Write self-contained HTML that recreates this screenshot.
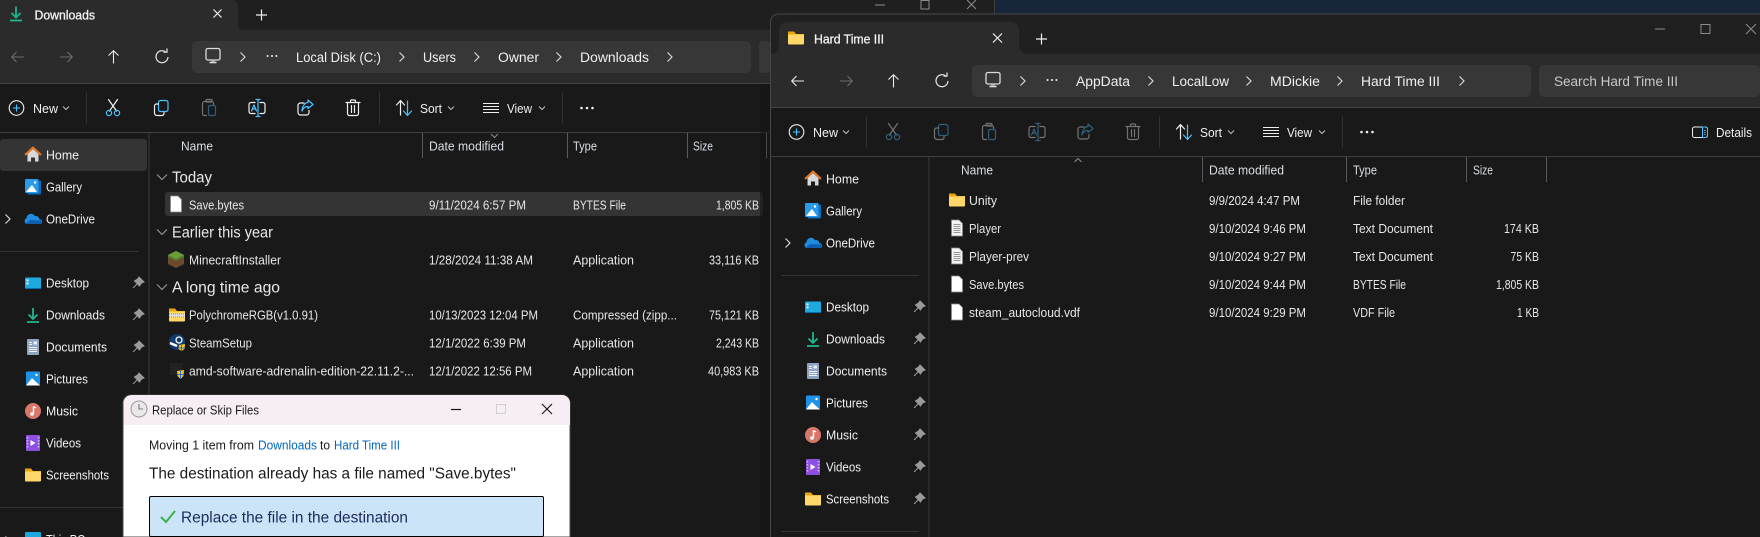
<!DOCTYPE html>
<html lang="en"><head><meta charset="utf-8"><title>Explorer windows</title>
<style>
html,body{margin:0;padding:0;background:#17263a;width:1760px;height:537px;overflow:hidden}
svg{display:block;position:absolute;left:0;top:0}
text{font-family:"Liberation Sans",sans-serif;font-size:12.5px;fill:#e6e6e6;white-space:pre}
.nav{fill:#f0f0f0}
.hdr{fill:#d8dfe6}
.addr{font-size:13.5px;fill:#f0f0f0}
.grp{font-size:15.5px;fill:#e8e8e8}
.tab{font-size:13px;fill:#f2f2f2;stroke:#f2f2f2;stroke-width:.3}
.tb{fill:#f0f0f0;font-size:13px}
.bl{fill:#0067c0}
.dk{fill:#1a1a1a}
.l{fill:none;stroke:#f0f0f0;stroke-width:1.2;stroke-linecap:round;stroke-linejoin:round}
.b{fill:none;stroke:#4cc2ff;stroke-width:1.2;stroke-linecap:round;stroke-linejoin:round}
.d{opacity:.42}
</style></head><body>
<svg width="1760" height="537" viewBox="0 0 1760 537">
<defs>
<g id="chev"><path d="M-2.500-4.500 2 0-2.500 4.500" fill="none" stroke="#d8d8d8" stroke-width="1.200"/></g>
<g id="dn"><path d="M-3-1.500 0 1.500 3-1.500" fill="none" stroke="#bdbdbd" stroke-width="1"/></g>
<g id="gchev"><path d="M-5-2.500 0 2.500 5-2.500" fill="none" stroke="#9a9a9a" stroke-width="1.100"/></g>
<g id="folder"><path d="M-8-6.500h6l2 2.500h8v4h-16z" fill="#e8a70c"/><path d="M-8-3.500h16v9a1 1 0 0 1-1 1h-14a1 1 0 0 1-1-1z" fill="#ffd869"/></g>
<g id="file"><path d="M-5.500-8h7.500l3.500 3.500v12.500h-11z" fill="#fff" stroke="#8a8a8a" stroke-width=".8"/></g>
<g id="txt"><path d="M-5.500-8h7.500l3.500 3.500v12.500h-11z" fill="#f4f4f4" stroke="#8a8a8a" stroke-width=".8"/><path d="M-3.500-3.500h7M-3.500-1.500h7M-3.500.5h7M-3.500 2.500h7M-3.500 4.500h7" stroke="#777" stroke-width=".8"/></g>
<g id="home"><path d="M-5.500-1v7.500h3.500v-4h4v4h3.500v-7.500l-5.500-5z" fill="#d8d8d8"/><path d="M-8 0 0-7.500 8 0" fill="none" stroke="#e8761c" stroke-width="2"/></g>
<g id="gallery"><rect x="-5.500" y="-6.500" width="13.500" height="14" rx="1" fill="#0f6cbd"/><rect x="-8" y="-8" width="13.500" height="14" rx="1" fill="#2a9bea"/><path d="M-7 5-2.500-.5-1-2 4 5z" fill="#fff"/><circle cx="2" cy="-4.500" r="1.200" fill="#fff"/></g>
<g id="cloud"><path d="M-5.500 5a3 3 0 0 1-1-5.800 4.500 4.500 0 0 1 8.500-2 3.500 3.500 0 0 1 4.500 3 2.500 2.500 0 0 1 1 4.800z" fill="#1f8be0"/><path d="M-7.500 5h15a2.500 2.500 0 0 0 .5-3.500l-11-.5z" fill="#0f5fb0"/></g>
<g id="desk"><rect x="-8" y="-5.500" width="16" height="11.500" rx="1" fill="#1eaadf"/><rect x="-6.500" y="-3.500" width="2" height="1.800" fill="#fff"/><rect x="-6.500" y="-.5" width="2" height="1.800" fill="#fff"/><path d="M-8 5h16v1h-16z" fill="#0a6fb0"/></g>
<g id="dl"><path d="M0-7V3.500M-4.500-.5 0 4 4.500-.5" fill="none" stroke="#1fb58f" stroke-width="1.800"/><path d="M-6 7h12" stroke="#1fb58f" stroke-width="1.800"/></g>
<g id="docs"><rect x="-6" y="-8" width="12" height="16" rx="1" fill="#8fa4c0"/><path d="M-4-4.500h3M-4-2.500h3M-4 .5h8M-4 2.500h8M-4 4.500h8" stroke="#eef2f7" stroke-width="1"/><rect x=".5" y="-5.500" width="3.500" height="3" fill="#eef2f7"/></g>
<g id="pics"><rect x="-7" y="-7.500" width="14" height="14" rx="1" fill="#1d92e6"/><path d="M-7 6.500-1-1l2.500 2.500 1 1 4.500 4z" fill="#fff"/><circle cx="3.500" cy="-4" r="1.200" fill="#fff"/></g>
<g id="music"><circle r="8" fill="#d9766a"/><path d="M.5-4.500v7" stroke="#fff" stroke-width="1.400"/><circle cx="-1" cy="3" r="1.800" fill="#fff"/><path d="M.5-4.500 3-3" stroke="#fff" stroke-width="1.300"/></g>
<g id="vid"><rect x="-7" y="-8" width="14" height="16" rx="1" fill="#8d4fe0"/><path d="M-2.500-3v6l5-3z" fill="#fff"/><path d="M-5.500-6v12M5.500-6v12" stroke="#d7b8ff" stroke-width="1.500" stroke-dasharray="1.500 1.500"/></g>
<g id="pin"><path d="M1-6 6-1 3.500 0 1.500 3-3.500-2-.5-4zM-1 1-5 5" fill="#9a9a9a" stroke="#9a9a9a" stroke-width="1"/></g>
<g id="back"><path d="M6 0H-6M-1.500-5-6.300 0-1.500 5" fill="none" stroke="currentColor" stroke-width="1.100"/></g>
<g id="up"><path d="M0 6.500V-6M-5-1.500 0-6.300 5-1.500" fill="none" stroke="currentColor" stroke-width="1.100"/></g>
<g id="refresh"><path d="M4.300-4.500a6 6 0 1 0 1.700 4.500M1.500-4.800h3.500V-8.500" fill="none" stroke="#eaeaea" stroke-width="1.200"/></g>
<g id="pc"><rect x="-7" y="-7.500" width="14" height="11.500" rx="1.800" fill="none" stroke="#dcdcdc" stroke-width="1.300"/><path d="M-3.500 6.500h7" stroke="#dcdcdc" stroke-width="1.600"/><path d="M-1 4v2.500M1 4v2.500" stroke="#dcdcdc"/></g>
<g id="more"><circle cx="-5.500" r="1.300" fill="#eee"/><circle r="1.300" fill="#eee"/><circle cx="5.500" r="1.300" fill="#eee"/></g>
<g id="plus"><circle r="7.300" fill="none" stroke="#eee" stroke-width="1.100"/><path d="M-3.500 0h7M0-3.500v7" stroke="#4cc2ff" stroke-width="1.100"/></g>
<g id="cut"><path class="l" d="M-4.500-8.500 3.500 3M4.500-8.500-3.500 3"/><circle class="b" cx="-4" cy="5" r="2.600"/><circle class="b" cx="4" cy="5" r="2.600"/></g>
<g id="copy"><rect class="b" x="-2.500" y="-7.500" width="9.500" height="11" rx="2"/><path class="l" d="M-2.500-4h-2a2 2 0 0 0-2 2v7a2.500 2.500 0 0 0 2.500 2.500h5a2 2 0 0 0 2-2v-1"/></g>
<g id="paste"><path class="l" d="M-2.500 7.500h-2a2 2 0 0 1-2-2v-10a2 2 0 0 1 2-2h7a2 2 0 0 1 2 2v1"/><rect class="l" x="-3" y="-8.500" width="6" height="2.500" rx="1"/><rect class="b" x="-.5" y="-2.500" width="7" height="10" rx="1.500"/></g>
<g id="rename"><path class="l" d="M-2-5.500h-4a2 2 0 0 0-2 2v7a2 2 0 0 0 2 2h4M3-5.500h3a2 2 0 0 1 2 2v7a2 2 0 0 1-2 2h-3"/><path class="b" d="M-1-8.500h4M-1 8.500h4M1-8.500V8.500"/><path class="b" d="M-5.500 3-3-3-.5 3M-4.700 1h3.500"/></g>
<g id="share"><path class="l" d="M-1-5h-3.500a2.500 2.500 0 0 0-2.500 2.500v7a2.500 2.500 0 0 0 2.500 2.500h6a2.500 2.500 0 0 0 2.500-2.500v-2"/><path class="b" d="M3-8 8-3.500 3 .5V-1.500C0-1.500-2 0-3 3-3-1.500 0-5.500 3-5.500z"/></g>
<g id="trash"><path class="l" d="M-7-5.500H7M-2.500-5.500v-1.500a1 1 0 0 1 1-1h3a1 1 0 0 1 1 1v1.500M-5.500-5.500v11a2 2 0 0 0 2 2h7a2 2 0 0 0 2-2v-11M-1.500-2.500v7M1.500-2.500v7"/></g>
<g id="sort"><path class="l" d="M-3.500 7V-7M-7.500-3-3.500-7.500.5-3"/><path class="b" d="M3.500-7V7M-.5 3 3.500 7.500 7.500 3"/></g>
<g id="view"><path d="M-8-4.500H8M-8-1.500H8M-8 1.500H8M-8 4.500H8" stroke="#eee" stroke-width="1"/></g>
</defs>

<rect width="1760" height="537" fill="#17263a"/>

<!-- LEFT WINDOW -->
<rect x="0" y="0" width="994" height="537" fill="#1f1f1f"/>
<rect x="994" y="0" width="1" height="14" fill="#3b3b3b"/>
<path d="M0 0H232a6 6 0 0 1 6 6V24a6 6 0 0 0 6 6H0z" fill="#2b2b2b"/>
<rect x="0" y="30" width="994" height="53" fill="#2b2b2b"/>
<rect x="0" y="83" width="994" height="1" fill="#424242"/>
<rect x="0" y="84" width="994" height="453" fill="#191919"/>
<rect x="0" y="132" width="994" height="1" fill="#3f3f3f"/>
<use href="#dl" x="16" y="13.500"/>
<text class="tab" x="34.500" y="19.500" textLength="60.500" lengthAdjust="spacingAndGlyphs">Downloads</text>
<path d="M213.500 9.500l8 8M221.500 9.500l-8 8" stroke="#eee" stroke-width="1.200"/>
<path d="M256 15h11M261.500 9.500v11" stroke="#eee" stroke-width="1.200"/>
<path d="M875 5h10" stroke="#8c8c8c"/><rect x="921" y="0.500" width="8" height="8.500" fill="none" stroke="#8c8c8c"/><path d="M967 0l9 9M976 0l-9 9" stroke="#8c8c8c"/>

<g color="#6d6d6d"><use href="#back" x="18" y="57"/><use href="#back" transform="translate(66 57) scale(-1 1)"/></g>
<use href="#up" x="113.500" y="57" color="#eaeaea"/>
<use href="#refresh" x="162" y="57"/>
<rect x="192" y="41" width="559" height="32" rx="5" fill="#373737"/>
<rect x="759" y="41" width="12" height="32" rx="4" fill="#373737"/>
<use href="#pc" x="213" y="56"/>
<use href="#chev" x="243" y="57"/>
<g transform="translate(272 56)"><use href="#more" transform="scale(.8)"/></g>
<text class="addr" x="296" y="62" textLength="85" lengthAdjust="spacingAndGlyphs">Local Disk (C:)</text><use href="#chev" x="402" y="57"/>
<text class="addr" x="423" y="62" textLength="33" lengthAdjust="spacingAndGlyphs">Users</text><use href="#chev" x="477" y="57"/>
<text class="addr" x="498" y="62" textLength="41" lengthAdjust="spacingAndGlyphs">Owner</text><use href="#chev" x="559" y="57"/>
<text class="addr" x="580" y="62" textLength="69" lengthAdjust="spacingAndGlyphs">Downloads</text><use href="#chev" x="670" y="57"/>

<use href="#plus" x="16.500" y="108"/>
<text class="tb" x="33" y="113" textLength="25" lengthAdjust="spacingAndGlyphs">New</text><use href="#dn" x="66" y="108"/>
<rect x="86" y="92" width="1" height="32" fill="#303030"/>
<use href="#cut" x="113" y="108"/><use href="#copy" x="161" y="108"/><g class="d"><use href="#paste" x="209" y="108"/></g>
<use href="#rename" x="257" y="108"/><use href="#share" x="305" y="108"/><use href="#trash" x="353" y="108"/>
<rect x="379" y="92" width="1" height="32" fill="#303030"/>
<use href="#sort" x="404" y="108"/>
<text class="tb" x="420" y="113" textLength="22" lengthAdjust="spacingAndGlyphs">Sort</text><use href="#dn" x="451" y="108"/>
<use href="#view" x="491" y="108"/>
<text class="tb" x="507" y="113" textLength="25" lengthAdjust="spacingAndGlyphs">View</text><use href="#dn" x="542" y="108"/>
<rect x="562" y="92" width="1" height="32" fill="#303030"/>
<use href="#more" x="587" y="108"/>

<rect x="148" y="133" width="2" height="404" fill="#2a2a2a"/>
<rect x="0" y="139" width="147" height="32" rx="3" fill="#343434"/>
<use href="#home" x="33" y="155"/><text class="nav" x="46" y="159.500" textLength="33" lengthAdjust="spacingAndGlyphs">Home</text>
<use href="#gallery" x="33" y="187"/><text class="nav" x="46" y="191.500" textLength="36" lengthAdjust="spacingAndGlyphs">Gallery</text>
<use href="#chev" x="8" y="219"/>
<use href="#cloud" x="33" y="219"/><text class="nav" x="46" y="223.500" textLength="49" lengthAdjust="spacingAndGlyphs">OneDrive</text>
<rect x="0" y="251" width="139" height="1" fill="#333"/>
<use href="#desk" x="33" y="283"/><text class="nav" x="46" y="287.500" textLength="43" lengthAdjust="spacingAndGlyphs">Desktop</text><use href="#pin" x="138" y="283"/>
<use href="#dl" x="33" y="315"/><text class="nav" x="46" y="319.500" textLength="59" lengthAdjust="spacingAndGlyphs">Downloads</text><use href="#pin" x="138" y="315"/>
<use href="#docs" x="33" y="347"/><text class="nav" x="46" y="351.500" textLength="61" lengthAdjust="spacingAndGlyphs">Documents</text><use href="#pin" x="138" y="347"/>
<use href="#pics" x="33" y="379"/><text class="nav" x="46" y="383.500" textLength="42" lengthAdjust="spacingAndGlyphs">Pictures</text><use href="#pin" x="138" y="379"/>
<use href="#music" x="33" y="411"/><text class="nav" x="46" y="415.500" textLength="32" lengthAdjust="spacingAndGlyphs">Music</text>
<use href="#vid" x="33" y="443"/><text class="nav" x="46" y="447.500" textLength="35" lengthAdjust="spacingAndGlyphs">Videos</text>
<use href="#folder" x="33" y="475"/><text class="nav" x="46" y="479.500" textLength="63" lengthAdjust="spacingAndGlyphs">Screenshots</text>
<rect x="0" y="507" width="123" height="1" fill="#333"/>
<use href="#chev" x="8" y="541"/>
<rect x="25" y="532" width="16" height="11" rx="1" fill="#1eaadf"/><text class="nav" x="46" y="544" textLength="39" lengthAdjust="spacingAndGlyphs">This PC</text>

<text class="hdr" x="181" y="150.500" textLength="32" lengthAdjust="spacingAndGlyphs">Name</text>
<text class="hdr" x="429" y="150.500" textLength="75" lengthAdjust="spacingAndGlyphs">Date modified</text>
<text class="hdr" x="573" y="150.500" textLength="24" lengthAdjust="spacingAndGlyphs">Type</text>
<text class="hdr" x="693" y="150.500" textLength="20" lengthAdjust="spacingAndGlyphs">Size</text>
<path d="M422.500 133v25M567.500 133v25M687.500 133v25M766.500 133v25" stroke="#5a5a5a"/>
<path d="M491 134l3.500 3.500 3.500-3.500" fill="none" stroke="#8c8c8c"/>
<rect x="165" y="192" width="598" height="24" rx="3" fill="#343434"/>
<use href="#gchev" x="162" y="177"/><text class="grp" x="172" y="182.500" textLength="40" lengthAdjust="spacingAndGlyphs">Today</text>
<use href="#file" x="176" y="204"/><text x="189" y="209.500" textLength="55" lengthAdjust="spacingAndGlyphs">Save.bytes</text>
<text x="429" y="209.500" textLength="97" lengthAdjust="spacingAndGlyphs">9/11/2024 6:57 PM</text><text x="573" y="209.500" textLength="53" lengthAdjust="spacingAndGlyphs">BYTES File</text><text x="716" y="209.500" textLength="43" lengthAdjust="spacingAndGlyphs">1,805 KB</text>
<use href="#gchev" x="162" y="232"/><text class="grp" x="172" y="237.500" textLength="101" lengthAdjust="spacingAndGlyphs">Earlier this year</text>
<g transform="translate(176 259)"><path d="M0-8 8-4V5L0 9-8 5V-4z" fill="#6d4a2c"/><path d="M0-8 8-4 0 0-8-4z" fill="#6aa03c"/><path d="M-8-4 0 0V2L-8-2z" fill="#4f8130"/><path d="M8-4 0 0V2L8-2z" fill="#4f8130"/></g>
<text x="189" y="264.500" textLength="92" lengthAdjust="spacingAndGlyphs">MinecraftInstaller</text>
<text x="429" y="264.500" textLength="104" lengthAdjust="spacingAndGlyphs">1/28/2024 11:38 AM</text><text x="573" y="264.500" textLength="61" lengthAdjust="spacingAndGlyphs">Application</text><text x="709" y="264.500" textLength="50" lengthAdjust="spacingAndGlyphs">33,116 KB</text>
<use href="#gchev" x="162" y="287"/><text class="grp" x="172" y="292.500" textLength="108" lengthAdjust="spacingAndGlyphs">A long time ago</text>
<g transform="translate(177 315)"><use href="#folder"/><path d="M-8-1H8v3H-8z" fill="#e0e0e0"/><path d="M-8-1H8" stroke="#888" stroke-dasharray="1 1"/><path d="M-8 2H8" stroke="#888" stroke-dasharray="1 1"/></g>
<text x="189" y="319.500" textLength="129" lengthAdjust="spacingAndGlyphs">PolychromeRGB(v1.0.91)</text>
<text x="429" y="319.500" textLength="109" lengthAdjust="spacingAndGlyphs">10/13/2023 12:04 PM</text><text x="573" y="319.500" textLength="104" lengthAdjust="spacingAndGlyphs">Compressed (zipp...</text><text x="709" y="319.500" textLength="50" lengthAdjust="spacingAndGlyphs">75,121 KB</text>
<g transform="translate(177 342)"><circle r="8" fill="#123a70"/><circle cx="2" cy="-2" r="3" fill="none" stroke="#fff" stroke-width="1.300"/><path d="M-7 1 0 4" stroke="#fff" stroke-width="2.500"/><path d="M2 3 8 2 7.500 7 4.500 9 1.500 7z" fill="#f3c623"/><path d="M4.500 3v6M1.800 6H8" stroke="#2a6fd0" stroke-width="1"/></g>
<text x="189" y="347.500" textLength="63" lengthAdjust="spacingAndGlyphs">SteamSetup</text>
<text x="429" y="347.500" textLength="97" lengthAdjust="spacingAndGlyphs">12/1/2022 6:39 PM</text><text x="573" y="347.500" textLength="61" lengthAdjust="spacingAndGlyphs">Application</text><text x="716" y="347.500" textLength="43" lengthAdjust="spacingAndGlyphs">2,243 KB</text>
<g transform="translate(177 371)"><path d="M-7-8H6V4H-7z" fill="#222"/><path d="M0 0 7-1 6.500 5 3.500 8 .5 5z" fill="#f3c623"/><path d="M3.500 0v8M.5 3.500H7" stroke="#2a6fd0" stroke-width="1"/></g>
<text x="189" y="375.500" textLength="225" lengthAdjust="spacingAndGlyphs">amd-software-adrenalin-edition-22.11.2-...</text>
<text x="429" y="375.500" textLength="103" lengthAdjust="spacingAndGlyphs">12/1/2022 12:56 PM</text><text x="573" y="375.500" textLength="61" lengthAdjust="spacingAndGlyphs">Application</text><text x="708" y="375.500" textLength="51" lengthAdjust="spacingAndGlyphs">40,983 KB</text>

<!-- DIALOG -->
<path d="M123 537V403a8 8 0 0 1 8-8H562a8 8 0 0 1 8 8V537z" fill="#fff" stroke="#4a4a4a" stroke-width="1"/>
<path d="M123.500 425V403a8 8 0 0 1 8-8H562a8 8 0 0 1 8 8V425z" fill="#f7edf4"/>
<g transform="translate(139 409)"><circle r="8" fill="#e8e8e8" stroke="#9a9a9a" stroke-width="1"/><path d="M0-5V0H4" fill="none" stroke="#777" stroke-width="1.100"/></g>
<text style="fill:#1a1a1a" x="152" y="414.500" textLength="107" lengthAdjust="spacingAndGlyphs">Replace or Skip Files</text>
<path d="M451 409.500h10" stroke="#111" stroke-width="1.200"/>
<rect x="496.500" y="404.500" width="9" height="9" fill="none" stroke="#cfcfcf"/>
<path d="M552 404 542 414M542 404 552 414" stroke="#111" stroke-width="1.100"/>
<text style="fill:#1a1a1a" x="149" y="449.500" textLength="105" lengthAdjust="spacingAndGlyphs">Moving 1 item from</text>
<text class="bl" x="258" y="449.500" textLength="59" lengthAdjust="spacingAndGlyphs">Downloads</text>
<text style="fill:#1a1a1a" x="320" y="449.500" textLength="10" lengthAdjust="spacingAndGlyphs">to</text>
<text class="bl" x="334" y="449.500" textLength="66" lengthAdjust="spacingAndGlyphs">Hard Time III</text>
<text style="fill:#1a1a1a;font-size:15.500px" x="149" y="478.500" textLength="367" lengthAdjust="spacingAndGlyphs">The destination already has a file named "Save.bytes"</text>
<rect x="149.500" y="496.500" width="394" height="40" rx="1.500" fill="#cce4f7" stroke="#000" stroke-width="1"/>
<path d="M161 517 166 522 175 511" fill="none" stroke="#3fae49" stroke-width="2"/>
<text style="fill:#1c2a5c;font-size:15.500px" x="181" y="522.500" textLength="227" lengthAdjust="spacingAndGlyphs">Replace the file in the destination</text>

<!-- RIGHT WINDOW -->
<path d="M770 537V22a8 8 0 0 1 8-8H1760V537z" fill="#202020"/>
<rect x="760" y="84" width="10" height="453" fill="#141414" opacity=".55"/>
<rect x="766" y="133" width="1" height="25" fill="#4a4a4a"/>
<path d="M770.500 537V22a8 8 0 0 1 8-8H1760" fill="none" stroke="#474747"/>
<path d="M771 54a8 8 0 0 0 8-8V30a8 8 0 0 1 8-8H1011a8 8 0 0 1 8 8V46a8 8 0 0 0 8 8z" fill="#2b2b2b"/>
<rect x="771" y="54" width="989" height="53" fill="#2b2b2b"/>
<rect x="771" y="107" width="989" height="1" fill="#434343"/>
<rect x="771" y="108" width="989" height="429" fill="#191919"/>
<rect x="771" y="156" width="989" height="1" fill="#3f3f3f"/>
<use href="#folder" x="796" y="38"/>
<text class="tab" x="814" y="43.500" textLength="70" lengthAdjust="spacingAndGlyphs">Hard Time III</text>
<path d="M993 33.500l9 9M1002 33.500l-9 9" stroke="#eee" stroke-width="1.200"/>
<path d="M1036 39h11M1041.500 33.500v11" stroke="#eee" stroke-width="1.200"/>
<path d="M1655 29h10" stroke="#8c8c8c"/><rect x="1701" y="24.500" width="9" height="9" fill="none" stroke="#8c8c8c"/><path d="M1746 24l10 10M1756 24l-10 10" stroke="#8c8c8c"/>

<use href="#back" x="798" y="81" color="#eaeaea"/>
<use href="#back" transform="translate(846 81) scale(-1 1)" color="#6d6d6d"/>
<use href="#up" x="893.500" y="81" color="#eaeaea"/>
<use href="#refresh" x="942" y="81"/>
<rect x="972" y="65" width="559" height="32" rx="5" fill="#373737"/>
<rect x="1539" y="65" width="221" height="32" rx="5" fill="#373737"/>
<use href="#pc" x="993" y="80"/>
<use href="#chev" x="1023" y="81"/>
<g transform="translate(1052 80)"><use href="#more" transform="scale(.8)"/></g>
<text class="addr" x="1076" y="86" textLength="54" lengthAdjust="spacingAndGlyphs">AppData</text><use href="#chev" x="1151" y="81"/>
<text class="addr" x="1172" y="86" textLength="57" lengthAdjust="spacingAndGlyphs">LocalLow</text><use href="#chev" x="1249" y="81"/>
<text class="addr" x="1270" y="86" textLength="50" lengthAdjust="spacingAndGlyphs">MDickie</text><use href="#chev" x="1340" y="81"/>
<text class="addr" x="1361" y="86" textLength="79" lengthAdjust="spacingAndGlyphs">Hard Time III</text><use href="#chev" x="1462" y="81"/>
<text class="addr" style="fill:#c8c8c8" x="1554" y="86" textLength="124" lengthAdjust="spacingAndGlyphs">Search Hard Time III</text>

<use href="#plus" x="796.500" y="132"/>
<text class="tb" x="813" y="137" textLength="25" lengthAdjust="spacingAndGlyphs">New</text><use href="#dn" x="846" y="132"/>
<rect x="866" y="116" width="1" height="32" fill="#303030"/>
<g class="d"><use href="#cut" x="893" y="132"/><use href="#copy" x="941" y="132"/><use href="#paste" x="989" y="132"/><use href="#rename" x="1037" y="132"/><use href="#share" x="1085" y="132"/><use href="#trash" x="1133" y="132"/></g>
<rect x="1159" y="116" width="1" height="32" fill="#303030"/>
<use href="#sort" x="1184" y="132"/>
<text class="tb" x="1200" y="137" textLength="22" lengthAdjust="spacingAndGlyphs">Sort</text><use href="#dn" x="1231" y="132"/>
<use href="#view" x="1271" y="132"/>
<text class="tb" x="1287" y="137" textLength="25" lengthAdjust="spacingAndGlyphs">View</text><use href="#dn" x="1322" y="132"/>
<rect x="1342" y="116" width="1" height="32" fill="#303030"/>
<use href="#more" x="1367" y="132"/>
<rect class="l" x="1692.500" y="127" width="15" height="10.500" rx="2" style="stroke-width:1"/>
<path d="M1702.500 127h3a2 2 0 0 1 2 2v6.500a2 2 0 0 1-2 2h-3z" fill="none" stroke="#4cc2ff"/>
<path d="M1704 130.500h2M1704 132.500h2M1704 134.500h2" stroke="#4cc2ff" stroke-width=".8"/>
<text class="tb" x="1716" y="137" textLength="36" lengthAdjust="spacingAndGlyphs">Details</text>

<rect x="928" y="157" width="2" height="380" fill="#2a2a2a"/>
<use href="#home" x="813" y="179"/><text class="nav" x="826" y="183.500" textLength="33" lengthAdjust="spacingAndGlyphs">Home</text>
<use href="#gallery" x="813" y="211"/><text class="nav" x="826" y="215.500" textLength="36" lengthAdjust="spacingAndGlyphs">Gallery</text>
<use href="#chev" x="788" y="243"/>
<use href="#cloud" x="813" y="243"/><text class="nav" x="826" y="247.500" textLength="49" lengthAdjust="spacingAndGlyphs">OneDrive</text>
<rect x="781" y="275" width="138" height="1" fill="#333"/>
<use href="#desk" x="813" y="307"/><text class="nav" x="826" y="311.500" textLength="43" lengthAdjust="spacingAndGlyphs">Desktop</text><use href="#pin" x="919" y="307"/>
<use href="#dl" x="813" y="339"/><text class="nav" x="826" y="343.500" textLength="59" lengthAdjust="spacingAndGlyphs">Downloads</text><use href="#pin" x="919" y="339"/>
<use href="#docs" x="813" y="371"/><text class="nav" x="826" y="375.500" textLength="61" lengthAdjust="spacingAndGlyphs">Documents</text><use href="#pin" x="919" y="371"/>
<use href="#pics" x="813" y="403"/><text class="nav" x="826" y="407.500" textLength="42" lengthAdjust="spacingAndGlyphs">Pictures</text><use href="#pin" x="919" y="403"/>
<use href="#music" x="813" y="435"/><text class="nav" x="826" y="439.500" textLength="32" lengthAdjust="spacingAndGlyphs">Music</text><use href="#pin" x="919" y="435"/>
<use href="#vid" x="813" y="467"/><text class="nav" x="826" y="471.500" textLength="35" lengthAdjust="spacingAndGlyphs">Videos</text><use href="#pin" x="919" y="467"/>
<use href="#folder" x="813" y="499"/><text class="nav" x="826" y="503.500" textLength="63" lengthAdjust="spacingAndGlyphs">Screenshots</text><use href="#pin" x="919" y="499"/>
<rect x="781" y="531" width="138" height="1" fill="#333"/>

<text class="hdr" x="961" y="174.500" textLength="32" lengthAdjust="spacingAndGlyphs">Name</text>
<text class="hdr" x="1209" y="174.500" textLength="75" lengthAdjust="spacingAndGlyphs">Date modified</text>
<text class="hdr" x="1353" y="174.500" textLength="24" lengthAdjust="spacingAndGlyphs">Type</text>
<text class="hdr" x="1473" y="174.500" textLength="20" lengthAdjust="spacingAndGlyphs">Size</text>
<path d="M1202.500 157v25M1346.500 157v25M1466.500 157v25M1546.500 157v25" stroke="#5a5a5a"/>
<path d="M1074.500 162l3.500-3.500 3.500 3.500" fill="none" stroke="#8c8c8c"/>

<use href="#folder" x="957" y="200"/><text x="969" y="205" textLength="28" lengthAdjust="spacingAndGlyphs">Unity</text>
<text x="1209" y="205" textLength="91" lengthAdjust="spacingAndGlyphs">9/9/2024 4:47 PM</text><text x="1353" y="205" textLength="52" lengthAdjust="spacingAndGlyphs">File folder</text>
<use href="#txt" x="957" y="228"/><text x="969" y="233" textLength="32" lengthAdjust="spacingAndGlyphs">Player</text>
<text x="1209" y="233" textLength="97" lengthAdjust="spacingAndGlyphs">9/10/2024 9:46 PM</text><text x="1353" y="233" textLength="80" lengthAdjust="spacingAndGlyphs">Text Document</text><text x="1504" y="233" textLength="35" lengthAdjust="spacingAndGlyphs">174 KB</text>
<use href="#txt" x="957" y="256"/><text x="969" y="261" textLength="60" lengthAdjust="spacingAndGlyphs">Player-prev</text>
<text x="1209" y="261" textLength="97" lengthAdjust="spacingAndGlyphs">9/10/2024 9:27 PM</text><text x="1353" y="261" textLength="80" lengthAdjust="spacingAndGlyphs">Text Document</text><text x="1510.500" y="261" textLength="28.500" lengthAdjust="spacingAndGlyphs">75 KB</text>
<use href="#file" x="957" y="284"/><text x="969" y="289" textLength="55" lengthAdjust="spacingAndGlyphs">Save.bytes</text>
<text x="1209" y="289" textLength="97" lengthAdjust="spacingAndGlyphs">9/10/2024 9:44 PM</text><text x="1353" y="289" textLength="53" lengthAdjust="spacingAndGlyphs">BYTES File</text><text x="1496" y="289" textLength="43" lengthAdjust="spacingAndGlyphs">1,805 KB</text>
<use href="#file" x="957" y="312"/><text x="969" y="317" textLength="111" lengthAdjust="spacingAndGlyphs">steam_autocloud.vdf</text>
<text x="1209" y="317" textLength="97" lengthAdjust="spacingAndGlyphs">9/10/2024 9:29 PM</text><text x="1353" y="317" textLength="42" lengthAdjust="spacingAndGlyphs">VDF File</text><text x="1517" y="317" textLength="22" lengthAdjust="spacingAndGlyphs">1 KB</text>
</svg>
</body></html>
